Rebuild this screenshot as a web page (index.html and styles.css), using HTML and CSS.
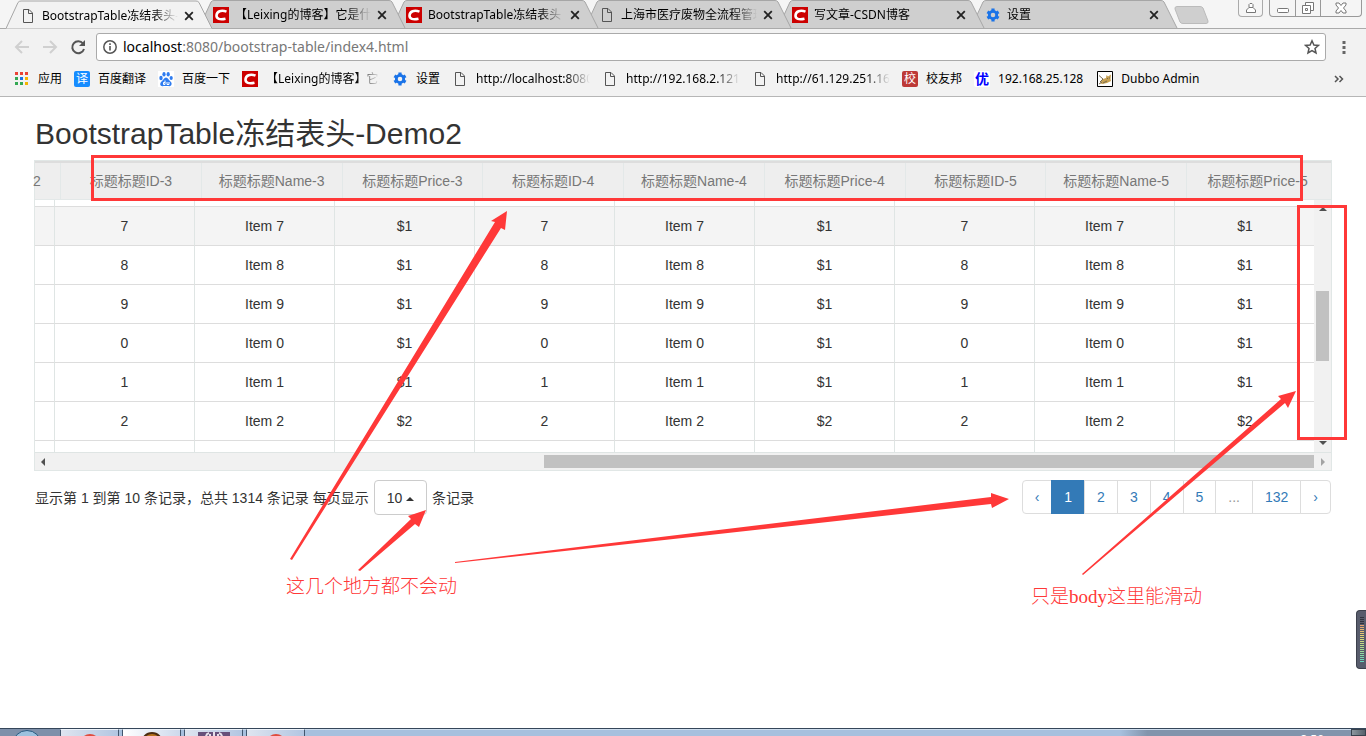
FILE: index.html
```html
<!DOCTYPE html>
<html lang="zh-CN">
<head>
<meta charset="utf-8">
<title>BootstrapTable冻结表头-Demo2</title>
<link rel="stylesheet" href="styles.css">
</head>
<body>
<svg class="defs" width="0" height="0" aria-hidden="true">
  <symbol id="shape" viewBox="0 0 207 28"><path d="M0 28 L12 2 Q13 .5 15 .5 H190 Q192 .5 193 2 L206 28" /></symbol>
  <symbol id="page" viewBox="0 0 16 16"><path d="M3.5 1.5H9L12.500 5V14.500H3.500ZM8.500 1.500V5.500H12.500" fill="none" stroke="#555" /></symbol>
  <symbol id="csdn" viewBox="0 0 16 16"><path fill="#c00" d="M0 0h16v16H0z"/><path d="M13.500 4.600C8 2.500 3.800 4.500 3.500 8.300C3.300 12 7 13 12.500 11.800" fill="none" stroke="#fff" stroke-width="2.600"/></symbol>
  <symbol id="gear" viewBox="0 0 16 16"><g fill="none" stroke="#1a73e8"><circle cx="8" cy="8" r="3.700" stroke-width="2.800"/><path stroke-width="3.200" d="M8 1.500V4M8 12v2.500M2.400 4.800l2 1.200M11.600 10l2 1.200M2.400 11.200l2-1.200M11.600 6l2-1.200"/></g></symbol>
  <symbol id="close" viewBox="0 0 10 10"><path d="M1.200 1.200L8.800 8.800M8.800 1.200L1.200 8.800" stroke="#222" stroke-width="1.800"/></symbol>
</svg>

<header class="chrome">
  <div class="tabstrip">
    <nav class="tabs">
      <div class="tab active"><svg class="tab-shape" preserveAspectRatio="none"><use href="#shape"/></svg><svg class="icon"><use href="#page"/></svg><span class="tab-title">BootstrapTable冻结表头-Demo2</span><button class="tab-close" aria-label="关闭"><svg><use href="#close"/></svg></button></div>
      <div class="tab"><svg class="tab-shape"><use href="#shape"/></svg><svg class="icon"><use href="#csdn"/></svg><span class="tab-title">【Leixing的博客】它是什么</span><button class="tab-close" aria-label="关闭"><svg><use href="#close"/></svg></button></div>
      <div class="tab"><svg class="tab-shape"><use href="#shape"/></svg><svg class="icon"><use href="#csdn"/></svg><span class="tab-title">BootstrapTable冻结表头</span><button class="tab-close" aria-label="关闭"><svg><use href="#close"/></svg></button></div>
      <div class="tab"><svg class="tab-shape"><use href="#shape"/></svg><svg class="icon"><use href="#page"/></svg><span class="tab-title">上海市医疗废物全流程管理</span><button class="tab-close" aria-label="关闭"><svg><use href="#close"/></svg></button></div>
      <div class="tab"><svg class="tab-shape"><use href="#shape"/></svg><svg class="icon"><use href="#csdn"/></svg><span class="tab-title">写文章-CSDN博客</span><button class="tab-close" aria-label="关闭"><svg><use href="#close"/></svg></button></div>
      <div class="tab"><svg class="tab-shape"><use href="#shape"/></svg><svg class="icon"><use href="#gear"/></svg><span class="tab-title">设置</span><button class="tab-close" aria-label="关闭"><svg><use href="#close"/></svg></button></div>
    </nav>
    <button class="new-tab" aria-label="新标签页"><svg width="36" height="18" viewBox="0 0 36 18"><path d="M3 .5H26Q28 .5 29 2L34 15Q34.500 17.500 32 17.500H9Q7 17.500 6 16L1 3Q.5 .5 3 .5Z" fill="#cfcfcf" stroke="#bbb"/></svg></button>
    <div class="window-buttons">
      <button class="win user" aria-label="用户"><svg width="12" height="12" viewBox="0 0 12 12"><path d="M4 5.500V2.500L5 1.500H7L8 2.500V5.500L10.500 8V10.500H1.500V8L4 5.500H8"/></svg></button>
      <div class="win-group">
        <button class="win" aria-label="最小化"><svg width="14" height="12" viewBox="0 0 14 12"><rect x="1.500" y="6.500" width="11" height="4" rx="1"/></svg></button>
        <button class="win" aria-label="还原"><svg width="14" height="14" viewBox="0 0 14 14"><path d="M4.500 4V1.500H12.500V9.500H10M1.500 4.500H9.500V12.500H1.500ZM4.500 7.500h2v2h-2z"/></svg></button>
        <button class="win wide" aria-label="关闭窗口"><svg width="12" height="12" viewBox="0 0 12 12"><path d="M1 1H4L6 3.500L8 1H11V3L8.500 6L11 9V11H8L6 8.500L4 11H1V9L3.500 6L1 3Z"/></svg></button>
      </div>
    </div>
  </div>

  <div class="toolbar">
    <button class="tool" aria-label="后退"><svg width="16" height="16" viewBox="0 0 16 16"><path d="M15 8H2M8 2L2 8L8 14" fill="none" stroke="#d0d0d0" stroke-width="2"/></svg></button>
    <button class="tool" aria-label="前进"><svg width="16" height="16" viewBox="0 0 16 16"><path d="M1 8H14M8 2L14 8L8 14" fill="none" stroke="#d0d0d0" stroke-width="2"/></svg></button>
    <button class="tool" aria-label="刷新"><svg width="16" height="16" viewBox="0 0 16 16"><path d="M13 4.500A6 6 0 1 0 14 10" fill="none" stroke="#555" stroke-width="2"/><path d="M15 1V7H9Z" fill="#555"/></svg></button>
    <div class="omnibox">
      <svg width="16" height="16" viewBox="0 0 16 16"><circle cx="8" cy="8" r="6.200" fill="none" stroke="#555" stroke-width="1.500"/><path d="M8 7V11.500M8 4.300V6" stroke="#555" stroke-width="1.600"/></svg>
      <a class="url" href="#"><b>localhost</b>:8080/bootstrap-table/index4.html</a>
      <button class="tool star" aria-label="收藏"><svg width="16" height="16" viewBox="0 0 16 16"><path d="M8 1.800L9.900 6L14.500 6.400L11 9.500L12 14L8 11.600L4 14L5 9.500L1.500 6.400L6.100 6Z" fill="none" stroke="#555" stroke-width="1.500"/></svg></button>
    </div>
    <button class="tool" aria-label="菜单"><svg width="16" height="16" viewBox="0 0 16 16"><path d="M6.500 2h3v3h-3zM6.500 7h3v3h-3zM6.500 12h3v3h-3z" fill="#666"/></svg></button>
  </div>

  <nav class="bookmarks">
    <a class="mark apps" href="#"><svg class="icon" viewBox="0 0 16 16"><path d="M1 1h3v3H1zM6 1h3v3H6zM11 1h3v3h-3z" fill="#ea4335"/><path d="M1 6h3v3H1zM1 11h3v3H1zM6 11h3v3H6z" fill="#34a853"/><path d="M6 6h3v3H6z" fill="#1a73e8"/><path d="M11 6h3v3h-3zM11 11h3v3h-3z" fill="#f4b400"/></svg><span>应用</span></a>
    <a class="mark" href="#"><span class="badge blue">译</span><span>百度翻译</span></a>
    <a class="mark" href="#"><svg class="icon" viewBox="0 0 16 16"><path fill="#fff" d="M0 0h16v16H0z"/><g fill="#2e7cf0"><ellipse cx="3" cy="7" rx="1.700" ry="2.200"/><ellipse cx="6" cy="3.300" rx="1.600" ry="2.300"/><ellipse cx="10.200" cy="3.300" rx="1.600" ry="2.300"/><ellipse cx="13.200" cy="7" rx="1.600" ry="2.100"/><path d="M8 6.500C10 6.500 10.500 9 12.500 10.500C15 12.500 13 16 10.500 15H5.500C2.500 16 1 13 3.500 10.500C5.500 9 6 6.500 8 6.500Z"/></g><path d="M7 9.500v4H5.500v-2H7M9 11v2.500h2V11" fill="none" stroke="#fff"/></svg><span>百度一下</span></a>
    <a class="mark" href="#"><svg class="icon"><use href="#csdn"/></svg><span class="clip">【Leixing的博客】它是什</span></a>
    <a class="mark" href="#"><svg class="icon"><use href="#gear"/></svg><span>设置</span></a>
    <a class="mark" href="#"><svg class="icon"><use href="#page"/></svg><span class="clip">http://localhost:8080</span></a>
    <a class="mark" href="#"><svg class="icon"><use href="#page"/></svg><span class="clip">http://192.168.2.121</span></a>
    <a class="mark" href="#"><svg class="icon"><use href="#page"/></svg><span class="clip">http://61.129.251.16</span></a>
    <a class="mark" href="#"><span class="badge red">校</span><span>校友邦</span></a>
    <a class="mark" href="#"><span class="badge white">优</span><span>192.168.25.128</span></a>
    <a class="mark dubbo" href="#"><svg class="icon" viewBox="0 0 16 16"><path d="M.5 .5h15v15H.5z" fill="#fff" stroke="#000"/><path d="M3 12L6 8L9 7L9.500 4L11 5.500L14 3.500L13.500 8L14 10L10 12L5 13Z" fill="#c6a052"/><path d="M2 4.500L6 8L3 11M2 13L5 11M10 7.500h1M12.500 6.500v1M6 12L10 10" fill="none" stroke="#776a50"/></svg><span>Dubbo Admin</span></a>
    <button class="more" aria-label="更多书签"><svg width="10" height="8" viewBox="0 0 10 8"><path d="M1 1L4 4L1 7M5.500 1L8.500 4L5.500 7" fill="none" stroke="#555" stroke-width="1.500"/></svg></button>
  </nav>
</header>

<main class="page">
  <h2>BootstrapTable冻结表头-Demo2</h2>
  <section class="table-box">
    <table class="head">
      <colgroup><col class="c-cut"><col span="9"><col class="c-pad"></colgroup>
      <thead><tr><th class="cut">2</th><th>标题标题ID-3</th><th>标题标题Name-3</th><th>标题标题Price-3</th><th>标题标题ID-4</th><th>标题标题Name-4</th><th>标题标题Price-4</th><th>标题标题ID-5</th><th>标题标题Name-5</th><th>标题标题Price-5</th><th></th></tr></thead>
    </table>
    <div class="viewport">
      <table class="rows">
        <colgroup><col class="c-first"><col span="9"></colgroup>
        <tbody>
          <tr class="above"><td></td><td></td><td></td><td></td><td></td><td></td><td></td><td></td><td></td><td></td></tr>
          <tr class="hover"><td></td><td>7</td><td>Item 7</td><td>$1</td><td>7</td><td>Item 7</td><td>$1</td><td>7</td><td>Item 7</td><td>$1</td></tr>
          <tr><td></td><td>8</td><td>Item 8</td><td>$1</td><td>8</td><td>Item 8</td><td>$1</td><td>8</td><td>Item 8</td><td>$1</td></tr>
          <tr><td></td><td>9</td><td>Item 9</td><td>$1</td><td>9</td><td>Item 9</td><td>$1</td><td>9</td><td>Item 9</td><td>$1</td></tr>
          <tr><td></td><td>0</td><td>Item 0</td><td>$1</td><td>0</td><td>Item 0</td><td>$1</td><td>0</td><td>Item 0</td><td>$1</td></tr>
          <tr><td></td><td>1</td><td>Item 1</td><td>$1</td><td>1</td><td>Item 1</td><td>$1</td><td>1</td><td>Item 1</td><td>$1</td></tr>
          <tr><td></td><td>2</td><td>Item 2</td><td>$2</td><td>2</td><td>Item 2</td><td>$2</td><td>2</td><td>Item 2</td><td>$2</td></tr>
          <tr class="below"><td></td><td></td><td></td><td></td><td></td><td></td><td></td><td></td><td></td><td></td></tr>
        </tbody>
      </table>
      <div class="vbar"><i class="arrow up"></i><span class="vspace-top"></span><span class="thumb"></span><span class="vspace-bottom"></span><i class="arrow down"></i></div>
    </div>
    <div class="hbar"><i class="arrow left"></i><span class="track"><span class="thumb"></span></span><i class="arrow right"></i></div>
  </section>

  <div class="footer">
    <div class="info">显示第 1 到第 10 条记录，总共 1314 条记录 每页显示 <button class="size">10<i class="caret"></i></button> 条记录</div>
    <ul class="pagination">
      <li><a href="#">‹</a></li><li class="current"><a href="#">1</a></li><li><a href="#">2</a></li><li><a href="#">3</a></li><li><a href="#">4</a></li><li><a href="#">5</a></li><li class="disabled"><a href="#">...</a></li><li><a href="#">132</a></li><li><a href="#">›</a></li>
    </ul>
  </div>
</main>

<svg class="notes" width="1366" height="736" viewBox="0 0 1366 736" aria-hidden="true">
  <g fill="none" stroke="#ff3838" stroke-width="3"><path d="M92.500 156.500H1301.500V199.500H92.500Z"/><path d="M1298.500 206.500H1345.500V438.500H1298.500Z"/></g>
  <g fill="#ff3838">
    <path d="M290 559L495 222L491 221L507 211L505 230L501 228L292 560Z"/>
    <path d="M358 570L411 519L408 516L426 510L419 527L415 524L360 571Z"/>
    <path d="M455 562L991 497L991 493L1009 499L992 508L991 504L455 563Z"/>
    <path d="M1082 574L1281 399L1278 396L1296 391L1288 408L1285 403L1083 575Z"/>
  </g>
</svg>
<p class="note note-left">这几个地方都不会动</p>
<p class="note note-right">只是<span class="latin">body</span>这里能滑动</p>

<div class="meter"><span></span></div>

<footer class="taskbar">
  <div class="start"><svg width="30" height="6" viewBox="0 0 30 6"><ellipse cx="15" cy="14" rx="14" ry="13.500" fill="#9cc1de" stroke="#285a80"/></svg></div>
  <button class="task" aria-label="Chrome"><svg width="20" height="6" viewBox="0 0 20 6"><circle cx="10" cy="13" r="10" fill="#e04c3e"/></svg></button>
  <button class="task light" aria-label="应用程序"><svg width="22" height="6" viewBox="0 0 22 6"><circle cx="11" cy="12" r="10" fill="#b8731e" stroke="#4b2c12" stroke-width="2"/></svg></button>
  <button class="task" aria-label="IntelliJ"><svg width="32" height="6" viewBox="0 0 32 6"><path d="M0 1h32v5H0z" fill="#67507a"/><path d="M8 6Q8 3 11 2M16 1v5M24 6Q24 3 21 2M12 3v3M20 3v3" fill="none" stroke="#e6e1ea" stroke-width="2"/></svg></button>
  <button class="task" aria-label="Chrome 2"><svg width="20" height="6" viewBox="0 0 20 6"><circle cx="10" cy="13" r="10" fill="#e04c3e"/></svg></button>
  <div class="tray"><span>8:50</span></div>
  <button class="desktop" aria-label="显示桌面"></button>
</footer>
</body>
</html>
```

FILE: styles.css
```css
* { box-sizing: border-box; }
body {
  margin: 0;
  min-height: 100vh;
  position: relative;
  display: flex;
  flex-direction: column;
  overflow: hidden;
  background: #fff;
  color: #333;
  font: 14px/20px "Liberation Sans", "Noto Sans CJK SC", sans-serif;
}
button { padding: 0; border: 0; background: none; font: inherit; color: inherit; }
a { color: inherit; text-decoration: none; }
svg { display: block; flex: none; }
.defs { position: absolute; }
.icon { width: 16px; height: 16px; }

.chrome {
  background: #f2f2f2;
  border-bottom: 1px solid #b6b6b6;
  color: #000;
  font: 12px/16px "Noto Sans", "Noto Sans CJK SC", sans-serif;
}
.tabstrip { display: flex; height: 29px; padding-left: 6px; background: #f5f5f5; border-bottom: 1px solid #aaa; }
.tabs { display: flex; height: 29px; isolation: isolate; }
.tab { position: relative; display: flex; align-items: center; width: 193px; height: 28px; padding: 2px 5px 0 14px; gap: 6px; }
.tab-shape { position: absolute; left: 0; top: 0; width: 207px; height: 28px; z-index: -1; fill: #cfcfcf; stroke: #a6a6a6; }
.tab:nth-child(1) { z-index: 6; }
.tab:nth-child(2) { z-index: 5; }
.tab:nth-child(3) { z-index: 4; }
.tab:nth-child(4) { z-index: 3; }
.tab:nth-child(5) { z-index: 2; }
.tab:nth-child(6) { z-index: 1; }
.tab.active, .tab.active .tab-shape { height: 29px; }
.tab.active .tab-shape { fill: #f2f2f2; }
.tab-title { flex: 1; overflow: hidden; white-space: nowrap; mask-image: linear-gradient(to left, transparent, #000 24px); }
.tab-close, .tab-close svg { width: 10px; height: 10px; }
.new-tab { margin: 6px 0 0 10px; align-self: flex-start; }
.window-buttons { display: flex; gap: 6px; margin-left: auto; padding-right: 4px; align-items: flex-start; }
.win { display: flex; align-items: center; justify-content: center; width: 25px; height: 16px; }
.win svg { fill: #fff; stroke: #777; }
.win.wide { width: 41px; }
.user { border: 1px solid #aaa; border-top: 0; border-radius: 0 0 4px 4px; height: 17px; }
.win-group { display: flex; border: 1px solid #999; border-top: 0; border-radius: 0 0 4px 4px; }
.win-group .win + .win { border-left: 1px solid #999; }

.toolbar { display: flex; align-items: center; gap: 12px; padding: 4px 14px 0; }
.tool { width: 16px; height: 16px; }
.omnibox { flex: 1; display: flex; align-items: center; gap: 5px; height: 28px; margin: 0 -2px; padding: 0 5px; background: #fff; border: 1px solid #aaa; border-radius: 3px; }
.url { flex: 1; color: #777; font-size: 14px; line-height: 20px; }
.url b { color: #000; font-weight: 400; }

.bookmarks { display: flex; align-items: center; height: 35px; gap: 12px; padding: 1px 22px 0 14px; }
.mark { display: flex; align-items: center; gap: 8px; white-space: nowrap; }
.clip { width: 114px; overflow: hidden; mask-image: linear-gradient(to left, transparent, #000 24px); }
.badge { width: 16px; height: 16px; font-size: 12px; line-height: 16px; text-align: center; border-radius: 2px; overflow: hidden; color: #fff; }
.blue { background: #168cff; }
.red { background: #bd3937; }
.white { background: #fff; color: #00f; font-size: 14px; font-weight: 700; }
.dubbo { margin-left: 2px; }
.more { margin-left: auto; }

.page { flex: 1; padding: 20px 34px; }
h2 { margin: 0 0 10px; padding-left: 1px; font-size: 30px; line-height: 33px; font-weight: 400; }
.table-box { border: 1px solid #e1e7e6; }
table { border-collapse: separate; border-spacing: 0; table-layout: fixed; }
.head { width: 100%; background: #eee; border-top: 2px solid #ddd; }
.head th { height: 37px; padding: 0; border-right: 1px solid #e3e8e8; border-bottom: 1px solid #e3e8e8; color: #777; font-weight: 400; white-space: nowrap; }
.head th:nth-last-child(-n+2) { border-right: 0; }
.head .cut { text-align: left; text-indent: -2px; }
.c-cut { width: 26px; }
.c-pad { width: 3px; }
.c-first { width: 20px; }
.viewport { display: flex; }
.rows { flex: 1; width: 0; margin-right: -1px; text-align: center; }
.rows td { height: 39px; padding: 0; border-right: 1px solid #dfe5e4; border-bottom: 1px solid #ddd; }
.rows td:last-child { border-right: 0; }
.rows .above td { height: 7px; }
.rows .below td { height: 11px; border-bottom: 0; }
.hover { background: #f4f4f4; }
.vbar { position: relative; display: flex; flex-direction: column; align-items: center; width: 17px; padding: 7px 2px; background: #f1f1f1; }
.thumb { display: block; background: #c1c1c1; }
.vbar .thumb { width: 13px; flex: 71; }
.vspace-top, .vspace-bottom { flex: 80; }
.hbar { display: flex; align-items: center; height: 18px; padding: 0 6px; gap: 7px; background: #f1f1f1; border-top: 1px solid #dfe5e4; }
.track { flex: 1; display: flex; justify-content: flex-end; }
.hbar .thumb { width: 61%; height: 13px; }
.arrow { border: 4px solid transparent; }
.up { border-top: 0; border-bottom-color: #505050; }
.down { border-bottom: 0; border-top-color: #505050; }
.left { border-left: 0; border-right-color: #505050; }
.right { border-right: 0; border-left-color: #a3a3a3; }

.footer { display: flex; justify-content: space-between; padding: 9px 1px 0; }
.size { height: 35px; margin: 0 1px; padding: 0 12px; border: 1px solid #ccc; border-radius: 4px; background: #fff; }
.caret { display: inline-block; margin-left: 4px; vertical-align: middle; border: 4px solid transparent; border-top: 0; border-bottom-color: #333; }
.pagination { display: flex; margin: 0; padding: 0; list-style: none; }
.pagination a { display: block; height: 34px; padding: 6px 12px; margin-left: -1px; border: 1px solid #ddd; color: #337ab7; background: #fff; }
.pagination li:first-child a { border-radius: 4px 0 0 4px; }
.pagination li:last-child a { border-radius: 0 4px 4px 0; }
.pagination .current a { background: #337ab7; border-color: #337ab7; color: #fff; }
.pagination .disabled a { color: #999; }

.notes { position: absolute; left: 0; top: 0; }
.note { position: absolute; margin: 0; color: #ff3838; font: 300 19px/24px "Noto Sans CJK SC", sans-serif; }
.latin { font-family: "Liberation Serif", serif; font-weight: 400; }
.note-left { left: 286px; top: 573px; }
.note-right { left: 1031px; top: 583px; }
.meter { position: absolute; right: 0; top: 610px; width: 10px; height: 59px; padding: 6px 2px 6px 3px; background: #585c6c; border: 1px solid #3c404c; border-right: 0; border-radius: 4px 0 0 4px; }
.meter span { display: block; width: 4px; height: 45px; background: repeating-linear-gradient(#0000 0 1px, #585c6c 1px 2px), linear-gradient(#30333d 0 8px, #e8a06c 8px, #e0d878 20px, #a8dc90 32px, #64d8c0); }

.taskbar { display: flex; height: 8px; overflow: hidden; border-top: 1px solid #35465a; background: linear-gradient(90deg, #a7c0de 82%, #8294ac 84%); box-shadow: inset 0 1px #cfdeee; }
.taskbar svg { margin: 1px auto 0; }
.start { width: 60px; background: #7e90aa; }
.start svg { margin-left: 12px; }
.task { width: 59px; height: 8px; margin-right: 3px; border: 1px solid #42566e; border-top-color: #eef4fb; background: linear-gradient(90deg, #dfe5f0, #b2c6e2); }
.light { background: linear-gradient(90deg, #fff, #cdd9ec); }
.tray { flex: 1; display: flex; justify-content: flex-end; padding: 3px 27px 0 0; color: #fff; font: 12px/16px "Noto Sans", sans-serif; }
.desktop { width: 15px; border: 1px solid #38424e; background: linear-gradient(90deg, #8c979f, #56616c); }
```
